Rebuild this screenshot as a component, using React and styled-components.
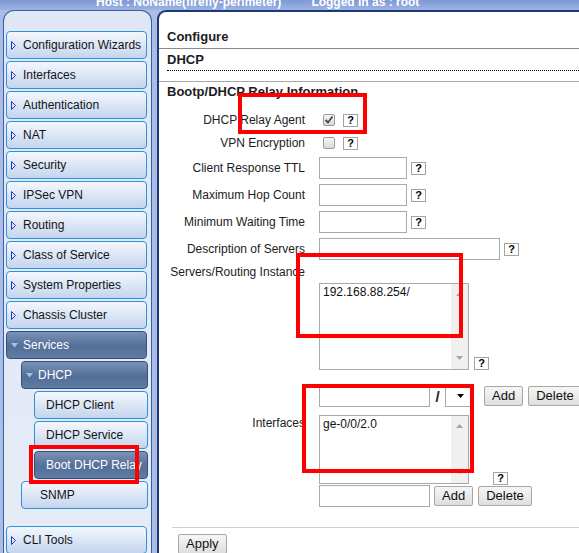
import React from "react";
import styled, { createGlobalStyle, css } from "styled-components";

const GlobalStyle = createGlobalStyle`
  html, body {
    margin: 0;
    padding: 0;
    height: 100%;
    overflow: hidden;
  }
  body {
    background: #a9bde6;
    font-family: "Liberation Sans", Arial, sans-serif;
  }
`;

const navItems = [
  { label: "Configuration Wizards", level: 0, arrow: "right" },
  { label: "Interfaces", level: 0, arrow: "right" },
  { label: "Authentication", level: 0, arrow: "right" },
  { label: "NAT", level: 0, arrow: "right" },
  { label: "Security", level: 0, arrow: "right" },
  { label: "IPSec VPN", level: 0, arrow: "right" },
  { label: "Routing", level: 0, arrow: "right" },
  { label: "Class of Service", level: 0, arrow: "right" },
  { label: "System Properties", level: 0, arrow: "right" },
  { label: "Chassis Cluster", level: 0, arrow: "right" },
  { label: "Services", level: 0, arrow: "down", active: true },
  { label: "DHCP", level: 1, arrow: "down", active: true },
  { label: "DHCP Client", level: 2 },
  { label: "DHCP Service", level: 2 },
  { label: "Boot DHCP Relay", level: 2, active: true },
  { label: "SNMP", level: 1 },
  { label: "CLI Tools", level: 0, arrow: "right", spaced: true },
];

const levels = {
  0: { ml: 2, w: 141 },
  1: { ml: 17, w: 127 },
  2: { ml: 30, w: 114 },
};

const Page = styled.div`
  position: relative;
  width: 579px;
  height: 553px;
  display: flex;
  flex-direction: column;
  overflow: hidden;
  background: #a9bde6;
`;

const Header = styled.div`
  flex: none;
  height: 10px;
  display: flex;
  align-items: flex-end;
  gap: 30px;
  padding: 0 0 1px 96px;
  box-sizing: border-box;
  overflow: hidden;
  background: linear-gradient(#7d98d4, #9db4e3);
  color: #fff;
  font: bold 12px/14px "Liberation Sans", Arial, sans-serif;
  white-space: nowrap;
`;

const Main = styled.div`
  flex: 1;
  min-height: 0;
  display: flex;
  gap: 5px;
  padding-left: 3px;
`;

const Sidebar = styled.nav`
  flex: none;
  width: 149px;
  box-sizing: border-box;
  padding-top: 20px;
  background: linear-gradient(#dfe7f4, #e6ecf6);
  border: 1px solid #3a5ea6;
  border-bottom: none;
  border-radius: 11px 11px 0 0;
`;

const NavItem = styled.div`
  box-sizing: border-box;
  height: 28px;
  margin: ${(p) => (p.$spaced ? 17 : 0)}px 0 2px ${(p) => levels[p.$level].ml}px;
  width: ${(p) => levels[p.$level].w}px;
  display: flex;
  align-items: center;
  padding-left: ${(p) => p.$pad}px;
  border-radius: 4px;
  font-size: 12px;
  white-space: nowrap;
  overflow: hidden;
  ${(p) =>
    p.$active
      ? css`
          border: 1px solid #35507e;
          background: linear-gradient(#7a92b6, #536e97 55%, #5f7ca5);
          color: #fff;
        `
      : css`
          border: 1px solid #2e92da;
          background: linear-gradient(#f3f7fd, #c4d5ee);
          color: #141414;
        `}
`;

const ArrowSlot = styled.span`
  flex: none;
  width: 12px;
  display: flex;
  align-items: center;
`;

const Content = styled.main`
  flex: 1;
  min-width: 0;
  background: #fff;
  border-left: 2px solid #1d3877;
  border-top: 2px solid #1d3877;
  border-top-left-radius: 9px;
  color: #1c1c24;
`;

const PageTitle = styled.div`
  padding: 17px 8px 3px;
  font: bold 13px/16px "Liberation Sans", Arial, sans-serif;
  border-bottom: 1px solid #8a8a8a;
`;

const SubBlock = styled.div`
  padding-bottom: 10px;
  border-bottom: 1px solid #a8a8a8;
`;

const SubTitle = styled.div`
  margin-left: 8px;
  padding: 3px 0 2px;
  font: bold 13px/16px "Liberation Sans", Arial, sans-serif;
  border-bottom: 1px dotted #000;
`;

const SectionTitle = styled.div`
  padding: 2px 8px 0;
  font: bold 13px/16px "Liberation Sans", Arial, sans-serif;
`;

const Form = styled.div`
  padding-top: 11px;
`;

const Row = styled.div`
  display: grid;
  grid-template-columns: 146px 1fr;
  column-gap: 14px;
  align-items: ${(p) => (p.$top ? "start" : "center")};
  min-height: ${(p) => p.$h || 0}px;
  margin-top: ${(p) => p.$mt || 0}px;
`;

const Label = styled.div`
  text-align: right;
  font-size: 12px;
  line-height: 15px;
  white-space: nowrap;
  padding-top: ${(p) => p.$pt || 0}px;
`;

const Field = styled.div`
  display: flex;
  align-items: ${(p) => p.$align || "center"};
  gap: ${(p) => p.$gap ?? 4}px;
`;

const CheckBox = styled.span`
  box-sizing: border-box;
  width: 12px;
  height: 12px;
  margin: 0 4px 0 4px;
  border: 1px solid #9a9a9a;
  border-radius: 2px;
  background: linear-gradient(#f6f6f6, #d9d9d9);
  display: flex;
  align-items: center;
  justify-content: center;
`;

const Help = styled.span`
  box-sizing: border-box;
  width: 15px;
  height: 13px;
  flex: none;
  border: 1px solid #a3a3a3;
  background: #fff;
  display: flex;
  align-items: center;
  justify-content: center;
  font: bold 11px/1 "Liberation Sans", Arial, sans-serif;
  color: #000;
  margin-left: ${(p) => p.$ml || 0}px;
  margin-bottom: ${(p) => p.$mb || 0}px;
`;

const TextInput = styled.div`
  box-sizing: border-box;
  flex: none;
  width: ${(p) => p.$w}px;
  height: 22px;
  border: 1px solid #a9a9a9;
  background: #fff;
`;

const TextArea = styled.div`
  box-sizing: border-box;
  flex: none;
  width: 150px;
  height: ${(p) => p.$h}px;
  border: 1px solid #a9a9a9;
  background: #fff;
  display: flex;
`;

const AreaText = styled.div`
  flex: 1;
  padding: 1px 3px;
  font-size: 12px;
  line-height: 15px;
  color: #111;
`;

const ScrollBar = styled.div`
  width: 17px;
  flex: none;
  background: #f0f0f0;
  display: flex;
  flex-direction: column;
  justify-content: space-between;
  align-items: center;
  padding: 8px 0 9px;
  box-sizing: border-box;
`;

const Slash = styled.span`
  width: 15px;
  text-align: center;
  font: bold 15px/1 "Liberation Sans", Arial, sans-serif;
  color: #222;
`;

const Select = styled.div`
  box-sizing: border-box;
  width: 26px;
  height: 22px;
  margin-right: 9px;
  border: 1px solid #a9a9a9;
  background: #fff;
  display: flex;
  align-items: center;
  justify-content: flex-end;
  padding-right: 6px;
`;

const Button = styled.button`
  box-sizing: border-box;
  height: 20px;
  padding: 0 7px;
  border: 1px solid #a7a7a7;
  border-radius: 2px;
  background: linear-gradient(#f6f6f6, #dedede);
  font: 13px/18px "Liberation Sans", Arial, sans-serif;
  color: #111;
  margin-left: ${(p) => p.$ml || 0}px;
`;

const Footer = styled.div`
  margin: 20px 0 0 13px;
  padding: 6px 0 0 6px;
  border-top: 1px solid #cfcfcf;
`;

const Mark = styled.div`
  position: absolute;
  left: ${(p) => p.$x}px;
  top: ${(p) => p.$y}px;
  width: ${(p) => p.$w}px;
  height: ${(p) => p.$h}px;
  box-sizing: border-box;
  border: 4px solid #ff0000;
  pointer-events: none;
`;

const RightArrow = () => (
  <svg width="6" height="9" viewBox="0 0 6 9">
    <polygon points="0.5,0.5 4.5,4.5 0.5,8.5" fill="#dfe8f8" stroke="#2434c8" strokeWidth="1" />
  </svg>
);

const DownArrow = () => (
  <svg width="7" height="5" viewBox="0 0 7 5">
    <polygon points="0,0 7,0 3.5,4.5" fill="#9cc3f3" />
  </svg>
);

const Tick = () => (
  <svg width="10" height="10" viewBox="0 0 10 10">
    <polyline points="1.5,5 4,7.5 8.5,1.5" fill="none" stroke="#454545" strokeWidth="1.8" />
  </svg>
);

const Tri = ({ up, color = "#a6a6a6" }) => (
  <svg width="7" height="4" viewBox="0 0 7 4">
    <polygon points={up ? "0,4 7,4 3.5,0" : "0,0 7,0 3.5,4"} fill={color} />
  </svg>
);

const Area = ({ h, text }) => (
  <TextArea $h={h}>
    <AreaText>{text}</AreaText>
    <ScrollBar>
      <Tri up />
      <Tri />
    </ScrollBar>
  </TextArea>
);

const padFor = (item) => {
  if (item.arrow) return 4;
  return item.level === 2 ? 11 : 18;
};

export default function App() {
  return (
    <>
      <GlobalStyle />
      <Page>
        <Header>
          <span>Host : NoName(firefly-perimeter)</span>
          <span>Logged in as : root</span>
        </Header>
        <Main>
          <Sidebar>
            {navItems.map((item) => (
              <NavItem
                key={item.label}
                $level={item.level}
                $active={item.active}
                $spaced={item.spaced}
                $pad={padFor(item)}
              >
                {item.arrow && (
                  <ArrowSlot>{item.arrow === "down" ? <DownArrow /> : <RightArrow />}</ArrowSlot>
                )}
                {item.label}
              </NavItem>
            ))}
          </Sidebar>
          <Content>
            <PageTitle>Configure</PageTitle>
            <SubBlock>
              <SubTitle>DHCP</SubTitle>
            </SubBlock>
            <SectionTitle>Bootp/DHCP Relay Information</SectionTitle>
            <Form>
              <Row $h={18}>
                <Label>DHCP Relay Agent</Label>
                <Field>
                  <CheckBox>
                    <Tick />
                  </CheckBox>
                  <Help>?</Help>
                </Field>
              </Row>
              <Row $h={18} $mt={5}>
                <Label>VPN Encryption</Label>
                <Field>
                  <CheckBox />
                  <Help>?</Help>
                </Field>
              </Row>
              <Row $mt={5}>
                <Label>Client Response TTL</Label>
                <Field>
                  <TextInput $w={88} />
                  <Help>?</Help>
                </Field>
              </Row>
              <Row $mt={5}>
                <Label>Maximum Hop Count</Label>
                <Field>
                  <TextInput $w={88} />
                  <Help>?</Help>
                </Field>
              </Row>
              <Row $mt={5}>
                <Label>Minimum Waiting Time</Label>
                <Field>
                  <TextInput $w={88} />
                  <Help>?</Help>
                </Field>
              </Row>
              <Row $mt={5}>
                <Label>Description of Servers</Label>
                <Field>
                  <TextInput $w={181} />
                  <Help>?</Help>
                </Field>
              </Row>
              <Row $mt={5}>
                <Label>Servers/Routing Instance</Label>
                <div />
              </Row>
              <Row $mt={3}>
                <div />
                <Field $align="flex-end" $gap={5}>
                  <Area h={87} text="192.168.88.254/" />
                  <Help>?</Help>
                </Field>
              </Row>
              <Row $mt={15}>
                <div />
                <Field $gap={0}>
                  <TextInput $w={111} />
                  <Slash>/</Slash>
                  <Select>
                    <Tri color="#000" />
                  </Select>
                  <Button $ml={4}>Add</Button>
                  <Button $ml={5}>Delete</Button>
                </Field>
              </Row>
              <Row $mt={8} $top>
                <Label $pt={1}>Interfaces</Label>
                <Field $align="flex-end" $gap={0}>
                  <Area h={69} text="ge-0/0/2.0" />
                  <Help $ml={24} $mb={-1}>?</Help>
                </Field>
              </Row>
              <Row $mt={1}>
                <div />
                <Field $gap={0}>
                  <TextInput $w={111} />
                  <Button $ml={4}>Add</Button>
                  <Button $ml={5}>Delete</Button>
                </Field>
              </Row>
            </Form>
            <Footer>
              <Button>Apply</Button>
            </Footer>
          </Content>
        </Main>
        <Mark $x={238} $y={93} $w={129} $h={41} />
        <Mark $x={296} $y={253} $w={167} $h={85} />
        <Mark $x={302} $y={384} $w={172} $h={89} />
        <Mark $x={29} $y={445} $w={110} $h={39} />
      </Page>
    </>
  );
}
